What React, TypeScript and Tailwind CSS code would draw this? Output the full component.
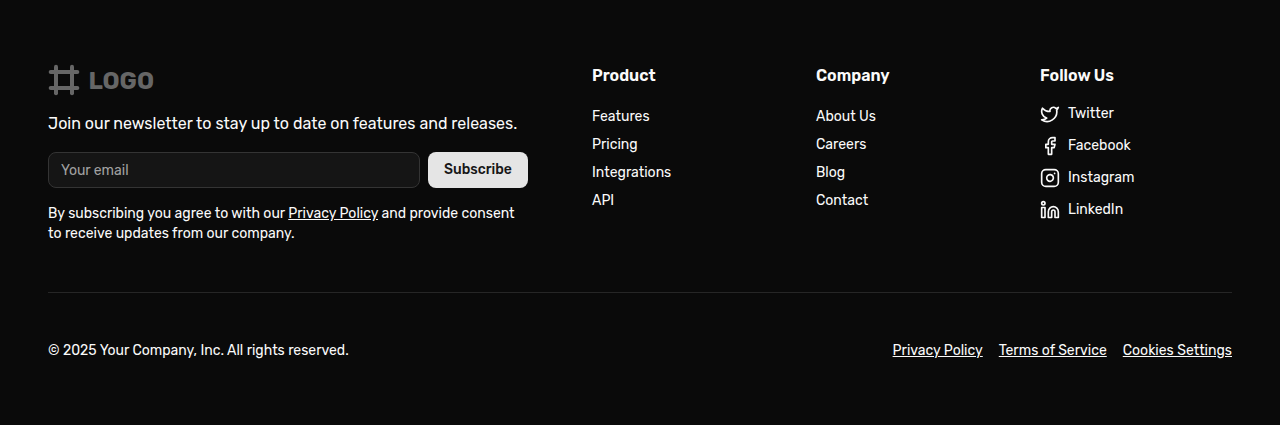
import { Frame, Twitter, Facebook, Instagram, Linkedin } from "lucide-react";

const product = ["Features", "Pricing", "Integrations", "API"];
const company = ["About Us", "Careers", "Blog", "Contact"];
const social = [
  { label: "Twitter", Icon: Twitter },
  { label: "Facebook", Icon: Facebook },
  { label: "Instagram", Icon: Instagram },
  { label: "LinkedIn", Icon: Linkedin },
];

function LinkColumn({ title, links }: { title: string; links: string[] }) {
  return (
    <div>
      <h2 className="text-base leading-6 font-semibold">{title}</h2>
      <ul className="mt-[19px] space-y-2">
        {links.map((label) => (
          <li key={label} className="h-5 text-sm leading-5">
            <a href="#">{label}</a>
          </li>
        ))}
      </ul>
    </div>
  );
}

export default function App() {
  return (
    <footer className="h-[425px] bg-[#0a0a0a] px-12 pt-16 font-['Rubik','Roboto',sans-serif] text-[#fafafa]">
      <div className="grid grid-cols-[480px_160px_160px_192px] gap-16">
        <div>
          <div className="flex h-8 items-center gap-2 text-[#666666]">
            <Frame size={32} strokeWidth={3} />
            <span className="ml-[0.4px] pt-0.5 text-2xl leading-8 font-bold">LOGO</span>
          </div>
          <p className="mt-4 text-base leading-6 whitespace-nowrap">
            Join our newsletter to stay up to date on features and releases.
          </p>
          <form className="mt-4 flex gap-2">
            <input
              type="email"
              placeholder="Your email"
              className="h-9 w-[372px] rounded-lg border border-[#343434] bg-[#151515] px-3 text-sm placeholder:text-[#a1a1a1]"
            />
            <button type="button" className="h-9 w-[100px] rounded-lg bg-[#e5e5e5] text-sm font-medium text-[#171717]">
              Subscribe
            </button>
          </form>
          <p className="mt-4 text-sm leading-5 whitespace-nowrap">
            By subscribing you agree to with our <a href="#" className="underline">Privacy Policy</a> and provide consent
            <br />
            to receive updates from our company.
          </p>
        </div>
        <LinkColumn title="Product" links={product} />
        <LinkColumn title="Company" links={company} />
        <div>
          <h2 className="text-base leading-6 font-semibold">Follow Us</h2>
          <ul className="mt-[14px] space-y-2">
            {social.map(({ label, Icon }) => (
              <li key={label} className="flex h-6 items-center gap-2 text-sm leading-5">
                <Icon size={20} strokeWidth={2} />
                <a href="#">{label}</a>
              </li>
            ))}
          </ul>
        </div>
      </div>
      <div className="mt-12 flex justify-between border-t border-[#262626] pt-12 text-sm leading-5">
        <p>© 2025 Your Company, Inc. All rights reserved.</p>
        <nav className="flex gap-4">
          <a href="#" className="underline">Privacy Policy</a>
          <a href="#" className="underline">Terms of Service</a>
          <a href="#" className="underline">Cookies Settings</a>
        </nav>
      </div>
    </footer>
  );
}
